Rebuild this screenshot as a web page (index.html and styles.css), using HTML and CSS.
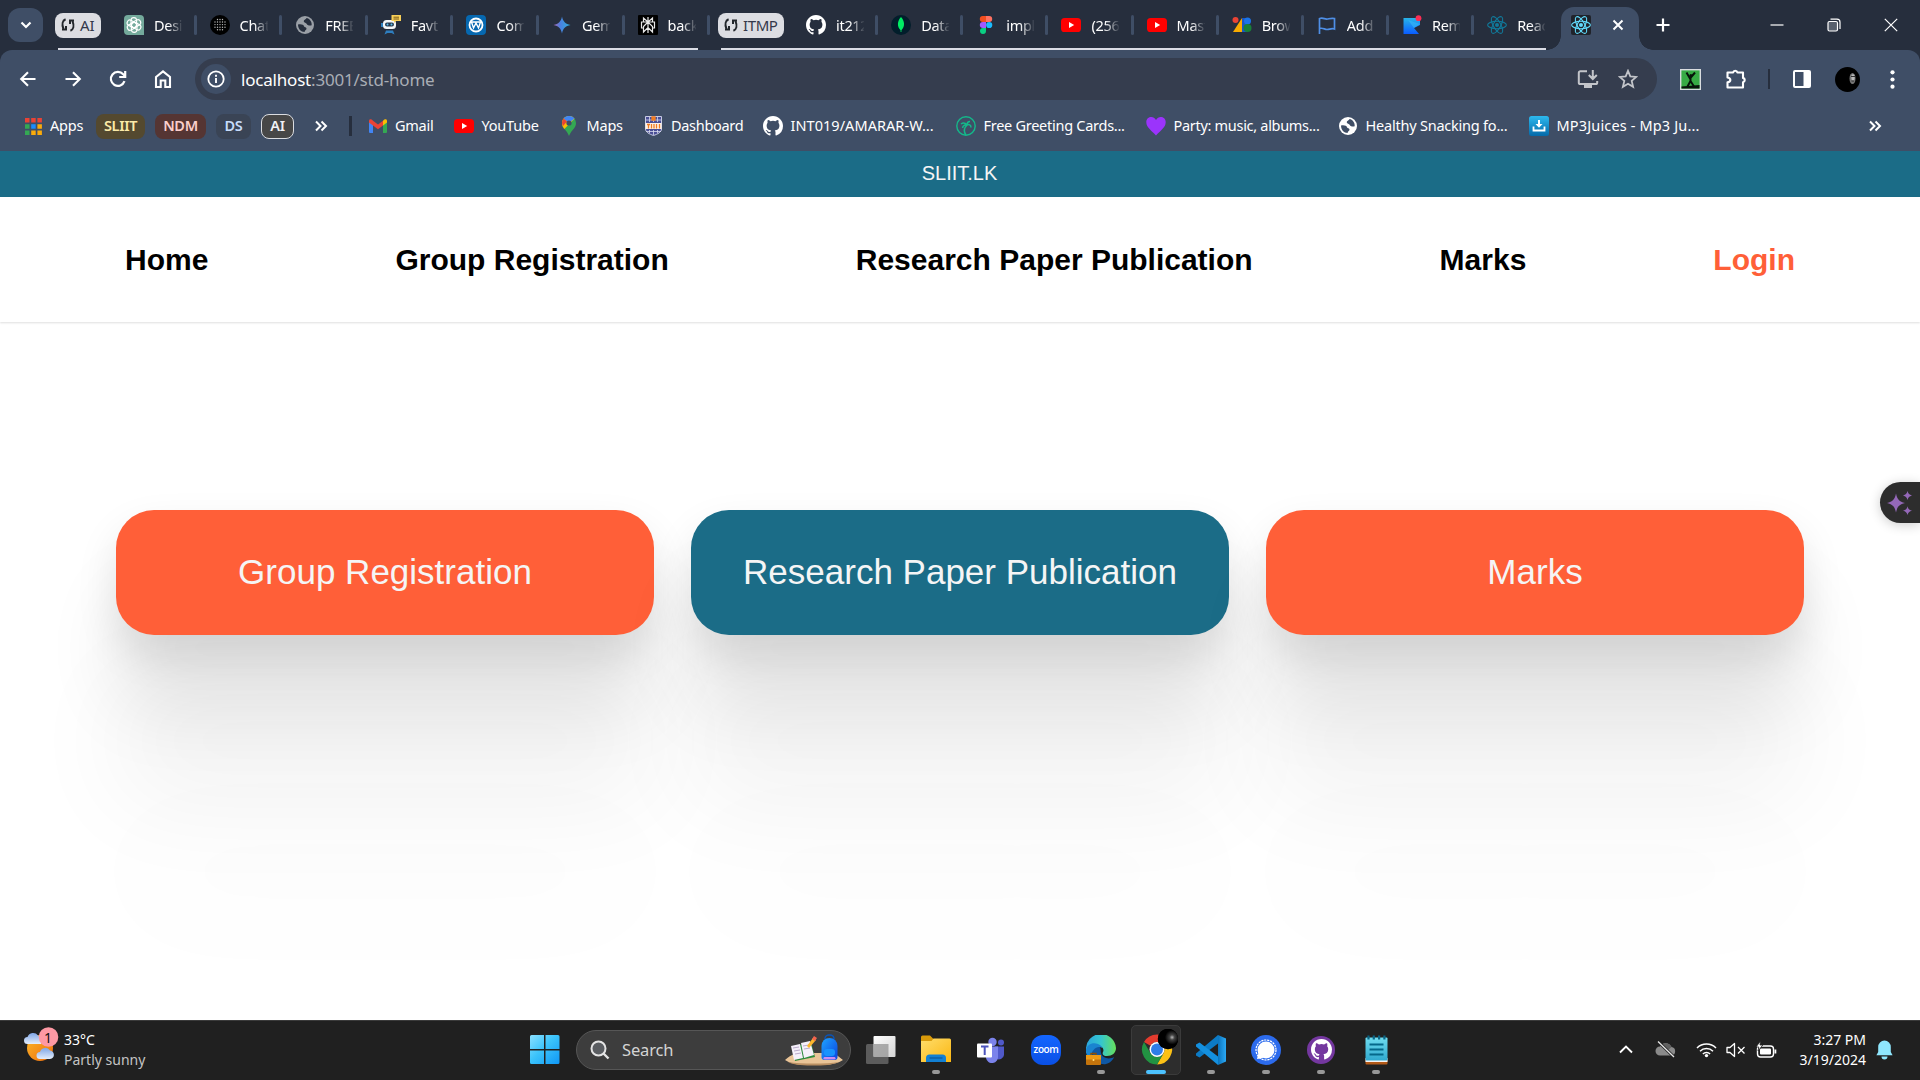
FILE: index.html
```html
<!DOCTYPE html>
<html lang="en">
<head>
<meta charset="utf-8">
<title>SLIIT.LK</title>
<link rel="stylesheet" href="styles.css">
</head>
<body>
<svg class="defs" width="0" height="0">
  <defs>
    <linearGradient id="gem" x1="0" y1="0" x2="1" y2="0"><stop offset="0" stop-color="#b06ab5"/><stop offset=".4" stop-color="#4a7fe0"/><stop offset="1" stop-color="#2fb0d8"/></linearGradient>
    <linearGradient id="sun" x1="0" y1="0" x2="1" y2="1"><stop offset="0" stop-color="#fbb829"/><stop offset="1" stop-color="#ee6c0c"/></linearGradient>
    <linearGradient id="cloud" x1="0" y1="0" x2="0" y2="1"><stop offset="0" stop-color="#7fa6e6"/><stop offset="1" stop-color="#e4eefc"/></linearGradient>
    <linearGradient id="win" x1="0" y1="0" x2="1" y2="1"><stop offset="0" stop-color="#8be0ff"/><stop offset=".45" stop-color="#3cc4fb"/><stop offset="1" stop-color="#0f97f5"/></linearGradient>
    <linearGradient id="folder" x1="0" y1="0" x2="1" y2="1"><stop offset="0" stop-color="#ffdd6b"/><stop offset="1" stop-color="#fbb712"/></linearGradient>
    <linearGradient id="edge" x1="0" y1="0" x2="1" y2="0"><stop offset="0" stop-color="#2aa5dd"/><stop offset=".5" stop-color="#35c6cf"/><stop offset="1" stop-color="#66e05a"/></linearGradient>
    <linearGradient id="vs" x1="0" y1="0" x2="1" y2="0"><stop offset="0" stop-color="#0b74bd"/><stop offset="1" stop-color="#2ba9f5"/></linearGradient>
    <linearGradient id="note" x1="0" y1="0" x2="0" y2="1"><stop offset="0" stop-color="#6fdcef"/><stop offset="1" stop-color="#2fa9cf"/></linearGradient>
    <linearGradient id="frame" x1="0" y1="0" x2="0" y2="1"><stop offset="0" stop-color="#28b4e8"/><stop offset="1" stop-color="#0a5cff"/></linearGradient>
    <linearGradient id="mp3" x1="0" y1="0" x2="0" y2="1"><stop offset="0" stop-color="#2db9ee"/><stop offset="1" stop-color="#0569a8"/></linearGradient>
    <linearGradient id="bag" x1="0" y1="0" x2="1" y2="1"><stop offset="0" stop-color="#1fa4ff"/><stop offset="1" stop-color="#0a43e0"/></linearGradient>
    <linearGradient id="view" x1="0" y1="0" x2="1" y2="1"><stop offset="0" stop-color="#fff"/><stop offset="1" stop-color="#d4d4d4"/></linearGradient>
    <radialGradient id="orb" cx=".7" cy=".42" r=".35"><stop offset="0" stop-color="#b8b8b8"/><stop offset=".35" stop-color="#444"/><stop offset="1" stop-color="#000"/></radialGradient>
    <symbol id="sync" viewBox="0 0 14 14"><path d="M4.600 1.200C1.600 2.400.6 6 2.400 10.600M1 11.400h4V8M9.400 12.800c3-1.200 4-4.800 2.200-9.400M13 2.600H9V6" fill="none" stroke="#22262b" stroke-width="2"/></symbol>
    <symbol id="yt" viewBox="0 0 20 20"><rect y="3" width="20" height="14" rx="3.600" fill="#f00"/><path d="M8 7v6l5.200-3z" fill="#fff"/></symbol>
    <symbol id="gh" viewBox="0 0 16 16"><path d="M8 0C3.58 0 0 3.58 0 8c0 3.54 2.29 6.53 5.47 7.59.4.07.55-.17.55-.38 0-.19-.01-.82-.01-1.49-2.01.37-2.53-.49-2.69-.94-.09-.23-.48-.94-.82-1.13-.28-.15-.68-.52-.01-.53.63-.01 1.08.58 1.23.82.72 1.21 1.87.87 2.33.66.07-.52.28-.87.51-1.07-1.78-.2-3.64-.89-3.64-3.95 0-.87.31-1.59.82-2.15-.08-.2-.36-1.02.08-2.12 0 0 .67-.21 2.200.82a7.600 7.600 0 0 1 4 0c1.530-1.040 2.200-.82 2.200-.82.44 1.100.16 1.920.08 2.120.51.56.82 1.270.82 2.150 0 3.070-1.870 3.750-3.650 3.950.29.25.54.73.54 1.480 0 1.070-.01 1.930-.01 2.200 0 .21.15.46.55.38A8 8 0 0 0 16 8c0-4.420-3.580-8-8-8z" fill="currentColor"/></symbol>
    <symbol id="react" viewBox="-10 -10 20 20"><g fill="none" stroke="currentColor" stroke-width="1.100"><ellipse rx="9.400" ry="3.700"/><ellipse rx="9.400" ry="3.700" transform="rotate(60)"/><ellipse rx="9.400" ry="3.700" transform="rotate(120)"/></g><circle r="2" fill="currentColor"/></symbol>
    <symbol id="globe" viewBox="0 0 20 20"><circle cx="10" cy="10" r="9" fill="currentColor"/><path d="M3 9.500c3.500-.5 5.500.2 6 1.800.4 1.400 2.500.6 2.500 2.200 0 1.500-1.500 1.500-2 3.500-3.500 0-6.500-3-6.500-7.500z" fill="var(--cut)"/><path d="M11.500 3c-.5 1.500-3 1.800-2.700 3.500.2 1.500 2.400 1 3 2.500.6 1.300 2.700 2 4.900 1.200C17 6.500 14.500 3.500 11.500 3z" fill="var(--cut)"/></symbol>
    <symbol id="more" viewBox="0 0 14 12"><path d="M2 1.500 6.500 6 2 10.500M7.500 1.500 12 6l-4.500 4.500" fill="none" stroke="#fff" stroke-width="2"/></symbol>
  </defs>
</svg>

<header class="browser">
  <div class="tabstrip">
    <button class="tab-search"><svg width="12" height="8" viewBox="0 0 12 8"><path d="m1.500 1.500 4.500 4.500 4.500-4.500" fill="none" stroke="#fff" stroke-width="2.200"/></svg></button>
    <div class="group group-ai">
      <span class="chip"><svg width="14" height="14"><use href="#sync"/></svg>AI</span>
      <div class="tab"><svg width="20" height="20" viewBox="0 0 20 20"><path d="M4 0h12a4 4 0 0 1 4 4v16H4a4 4 0 0 1-4-4V4a4 4 0 0 1 4-4z" fill="#74aa9c"/><g fill="none" stroke="#fff" stroke-width="1.100"><rect x="7" y="2.600" width="5.600" height="10" rx="2.800"/><rect x="7" y="2.600" width="5.600" height="10" rx="2.800" transform="rotate(60 10 10)"/><rect x="7" y="2.600" width="5.600" height="10" rx="2.800" transform="rotate(120 10 10)"/><rect x="7" y="2.600" width="5.600" height="10" rx="2.800" transform="rotate(180 10 10)"/><rect x="7" y="2.600" width="5.600" height="10" rx="2.800" transform="rotate(240 10 10)"/><rect x="7" y="2.600" width="5.600" height="10" rx="2.800" transform="rotate(300 10 10)"/></g></svg><span>Desi</span></div>
      <div class="tab"><svg width="20" height="20" viewBox="0 0 20 20"><circle cx="10" cy="10" r="10" fill="#000"/><g stroke="#bbb" stroke-width="1.400" stroke-linecap="round" stroke-dasharray="0 2.500"><path d="M7.500 4.500h6M5 7h11M5 9.600h11M5 12.200h11M7.500 14.800h6"/></g></svg><span>Chat</span></div>
      <div class="tab"><svg class="globe-gray" width="20" height="20"><use href="#globe"/></svg><span>FREE</span></div>
      <div class="tab"><svg width="20" height="20" viewBox="0 0 20 20"><rect x="2" y="5" width="13" height="9" rx="3.500" fill="#f4f6f8"/><rect x="0" y="8" width="2" height="4" fill="#2e7fc0"/><rect x="4" y="7.500" width="9" height="4" rx="2" fill="#26384f"/><circle cx="6.500" cy="9.500" r="1" fill="#5fc4f2"/><circle cx="10.500" cy="9.500" r="1" fill="#5fc4f2"/><path d="M5 15.500h7l1.500 4-3-1.500H6.500l-3 1.500z" fill="#2e7fc0"/><path d="M10.500 0H20v6h-5l-2 2V6h-2.500z" fill="#f7cf58"/><path d="M12.500 2.200h5.500M12.500 4h5.500" stroke="#795a1a"/></svg><span>Favt</span></div>
      <div class="tab"><svg width="20" height="20" viewBox="0 0 20 20"><rect width="20" height="20" rx="4" fill="#0668b0"/><circle cx="10" cy="10" r="6.500" fill="none" stroke="#fff" stroke-width="1.800"/><path d="m5.500 7 2 6 2.500-5 2.500 5 2-6M4 7h12" fill="none" stroke="#fff" stroke-width="1.400"/></svg><span>Com</span></div>
      <div class="tab"><svg width="20" height="20" viewBox="0 0 20 20"><path d="M10 1.500c.9 5 3.500 7.500 8.500 8.500-5 .9-7.600 3.500-8.500 8.500-.9-5-3.500-7.600-8.500-8.500 5-1 7.600-3.500 8.500-8.500z" fill="url(#gem)"/></svg><span>Gemi</span></div>
      <div class="tab last"><svg width="20" height="20" viewBox="0 0 20 20"><rect width="20" height="20" rx="1" fill="#000"/><path d="M10 2v16M10 7 5.500 3v4h9V3zM5.500 7H3.500v6h2M14.500 7h2v6h-2M10 7l-4.500 4.500V17l4.500-4.500 4.500 4.500v-5.500z" fill="none" stroke="#e8e8e8" stroke-width="1.200"/></svg><span>back</span></div>
    </div>
    <div class="group group-itmp">
      <span class="chip"><svg width="14" height="14"><use href="#sync"/></svg>ITMP</span>
      <div class="tab"><svg width="20" height="20"><use href="#gh"/></svg><span>it212</span></div>
      <div class="tab"><svg width="20" height="20" viewBox="0 0 20 20"><circle cx="10" cy="10" r="10" fill="#021e2b"/><path d="M10 2c3.800 4 4.200 9.500.4 13.300V17h-.8v-1.700C5.800 11.500 6.200 6 10 2z" fill="#00ed64"/></svg><span>Data</span></div>
      <div class="tab"><svg width="20" height="20" viewBox="0 0 20 20"><path d="M10 1H6.800a3 3 0 0 0 0 6H10z" fill="#f24e1e"/><path d="M10 1h3.200a3 3 0 0 1 0 6H10z" fill="#ff7262"/><path d="M10 7H6.800a3 3 0 0 0 0 6H10z" fill="#a259ff"/><circle cx="13.200" cy="10" r="3.100" fill="#1abcfe"/><path d="M10 13H6.800a3 3 0 1 0 3.200 3z" fill="#0acf83"/></svg><span>impl</span></div>
      <div class="tab"><svg width="20" height="20"><use href="#yt"/></svg><span>(256)</span></div>
      <div class="tab"><svg width="20" height="20"><use href="#yt"/></svg><span>Mast</span></div>
      <div class="tab"><svg width="20" height="20" viewBox="0 0 20 20"><circle cx="3.500" cy="5" r="3" fill="#ea4335"/><path d="M10 3v14H1z" fill="#f9ab00"/><path d="M10 3h4a3.500 3.500 0 0 1 1 6.500V17h-5z" fill="#1a56c4"/><circle cx="15.500" cy="6" r="3.500" fill="#1a73e8"/><circle cx="15.500" cy="13" r="4" fill="#188038"/></svg><span>Brow</span></div>
      <div class="tab"><svg width="20" height="20" viewBox="0 0 20 20"><path d="M2.500 19V3M2.500 3.500c4-1.200 5 1 8 .5 3-.6 4-1 7-.5v10.500c-3-1-5 .5-7.500.5s-4-2-7.500-1" fill="none" stroke="#4f8fe6" stroke-width="1.700"/></svg><span>Add</span></div>
      <div class="tab"><svg width="20" height="20" viewBox="0 0 20 20"><path d="M1.500 3H14a4 4 0 0 0 4 3v4l-6 3 5 6H1.500z" fill="url(#frame)"/><path d="m6 5 6 8 6-4z" fill="#39b8f5" opacity=".6"/><circle cx="16.500" cy="3.200" r="2.900" fill="#fb2d54"/></svg><span>Rem</span></div>
      <div class="tab last"><svg class="react-dark" width="20" height="20"><use href="#react"/></svg><span>Reac</span></div>
    </div>
    <div class="tab-active"><span class="react-tile"><svg width="20" height="20"><use href="#react"/></svg></span><svg width="12" height="12" viewBox="0 0 12 12"><path d="m1.500 1.500 9 9m0-9-9 9" stroke="#fff" stroke-width="2"/></svg></div>
    <svg class="new-tab" width="14" height="14" viewBox="0 0 14 14"><path d="M7 .5v13M.5 7h13" stroke="#fff" stroke-width="2.200"/></svg>
    <div class="window-buttons">
      <svg width="14" height="14" viewBox="0 0 14 14"><path d="M.5 7h13" stroke="#fff" stroke-width="1.200"/></svg>
      <svg width="14" height="14" viewBox="0 0 14 14"><rect x="1" y="3.500" width="9.500" height="9.500" rx="1.500" fill="#8a919e" fill-opacity=".5" stroke="#fff" stroke-width="1.200"/><path d="M3.500 1.200h6.500a3 3 0 0 1 3 3V11" fill="none" stroke="#fff" stroke-width="1.200"/></svg>
      <svg width="14" height="14" viewBox="0 0 14 14"><path d="m.8.800 12.400 12.400m0-12.400L.8 13.200" stroke="#fff" stroke-width="1.200"/></svg>
    </div>
  </div>

  <div class="toolbar">
    <div class="nav-buttons">
      <svg width="20" height="20" viewBox="0 0 20 20"><path d="M17.500 10H3.500M10 3.200 3.200 10l6.800 6.800" fill="none" stroke="#fff" stroke-width="2.100"/></svg>
      <svg width="20" height="20" viewBox="0 0 20 20"><path d="M2.500 10h14M10 3.200 16.800 10 10 16.800" fill="none" stroke="#fff" stroke-width="2.100"/></svg>
      <svg width="20" height="20" viewBox="0 0 20 20"><path d="M16.500 12.200A7 7 0 1 1 15.200 5.300L17 7M17.200 2v6h-6" fill="none" stroke="#fff" stroke-width="2.200"/></svg>
      <svg width="20" height="20" viewBox="0 0 20 20"><path d="M3 8 10 2.400 17 8v10h-4.700v-6.500H7.700V18H3z" fill="none" stroke="#fff" stroke-width="2.100"/></svg>
    </div>
    <div class="omnibox">
      <span class="site-info"><svg width="18" height="18" viewBox="0 0 18 18"><circle cx="9" cy="9" r="7.700" fill="none" stroke="#fff" stroke-width="1.800"/><path d="M9 8v5M9 4.700v2" stroke="#fff" stroke-width="1.900"/></svg></span>
      <span class="url">localhost<i>:3001/std-home</i></span>
      <svg class="install" width="22" height="20" viewBox="0 0 22 20"><path d="M10 2.200H3.400a1.600 1.600 0 0 0-1.600 1.600v9.600A1.600 1.600 0 0 0 3.400 15h15.200a1.600 1.600 0 0 0 1.600-1.600V12M15.800 1v8.500M11.800 6l4 4 4-4" fill="none" stroke="#c3c5ca" stroke-width="2"/><path d="M7 15h8v4H7z" fill="#c3c5ca"/></svg>
      <svg width="20" height="20" viewBox="0 0 20 20"><path d="m10 1.800 2.300 5.600 6 .5-4.600 4 1.400 5.900L10 14.700l-5.100 3.100 1.400-5.900-4.600-4 6-.5z" fill="none" stroke="#c3c5ca" stroke-width="1.800"/></svg>
    </div>
    <div class="tools">
      <svg class="t-ext" width="21" height="21" viewBox="0 0 21 21"><rect x=".7" y=".7" width="19.600" height="19.600" fill="#37ab45" stroke="#d8dcdf" stroke-width="1.400"/><path d="M6.500 3.500 10 9.500 15 3.500M10.500 8v5M10.500 12l-3 5.500M10.500 12l3.500 5.500" fill="none" stroke="#06140a" stroke-width="2"/><circle cx="10.800" cy="6.500" r="1.500" fill="#06140a"/><path d="M1.500 17.500 19.500 16v3.500h-18z" fill="#06140a"/></svg>
      <svg class="t-puzzle" width="22" height="22" viewBox="0 0 22 22"><path d="M2.500 4.500h5.600a2.200 2.200 0 0 1 4.300 0h5.600v5.400a2.200 2.200 0 0 1 0 4.300v5.300H2.500v-5.200c3.800-.6 3.800-4.200 0-4.800z" fill="none" stroke="#fff" stroke-width="2.100" stroke-linejoin="round"/></svg>
      <span class="rule"></span>
      <svg class="t-panel" width="18" height="18" viewBox="0 0 18 18"><rect x="1" y="1" width="16" height="16" rx="1" fill="none" stroke="#fff" stroke-width="2"/><path d="M10.500 1H17v16h-6.500z" fill="#fff"/></svg>
      <svg class="t-avatar" width="25" height="25" viewBox="0 0 25 25"><circle cx="12.500" cy="12.500" r="12.500" fill="#000"/><ellipse cx="17.500" cy="11.500" rx="3" ry="5.500" fill="#777"/><ellipse cx="18" cy="10.500" rx="1.600" ry="3.200" fill="#bbb"/><path d="M16 9.500h4M16.500 14h2.500" stroke="#222" stroke-width=".9"/></svg>
      <svg width="5" height="19" viewBox="0 0 5 19"><g fill="#fff"><circle cx="2.500" cy="2.300" r="2.100"/><circle cx="2.500" cy="9.500" r="2.100"/><circle cx="2.500" cy="16.700" r="2.100"/></g></svg>
    </div>
  </div>

  <nav class="bookmarks">
    <a class="bm bm-apps"><svg width="17" height="17" viewBox="0 0 17 17"><path d="M0 0h4.500v4.500H0zM6.200 0h4.500v4.500H6.200zM12.400 0h4.500v4.500h-4.500z" fill="#ea4335"/><path d="M0 6.200h4.500v4.500H0zM0 12.400h4.500v4.500H0z" fill="#34a853"/><path d="M6.200 6.200h4.500v4.500H6.200z" fill="#1a8cff"/><path d="M12.400 6.200h4.500v4.500h-4.500zM6.200 12.400h4.500v4.500H6.200zM12.400 12.400h4.500v4.500h-4.500z" fill="#fbab0a"/></svg><span>Apps</span></a>
    <a class="pill pill-yellow">SLIIT</a><a class="pill pill-red">NDM</a><a class="pill pill-slate">DS</a><a class="pill pill-grey">AI</a>
    <svg class="more-groups" width="14" height="12"><use href="#more"/></svg>
    <span class="rule bold"></span>
    <a class="bm bm-gmail"><svg width="18" height="14" viewBox="0 0 18 14"><path d="M0 2v11a1 1 0 0 0 1 1h3V5z" fill="#4285f4"/><path d="M18 2v11a1 1 0 0 1-1 1h-3V5z" fill="#34a853"/><path d="M14 1.800V6.500l4-3V2c0-2-2-2.500-4-.2z" fill="#fbbc04"/><path d="M0 3.500V2C0 0 2-.5 4 1.800l5 3.800 5-3.800v4.700l-5 3.800z" fill="#ea4335"/></svg><span>Gmail</span></a>
    <a class="bm bm-yt"><svg width="20" height="20"><use href="#yt"/></svg><span>YouTube</span></a>
    <a class="bm bm-maps"><svg width="14" height="20" viewBox="0 0 14 20"><path d="M0 7c0 3 1.200 4.600 3.500 7.300C5.500 16.600 6 18 7 20c1-2 1.500-3.400 3.500-5.700C12.800 11.600 14 10 14 7A7 7 0 0 0 0 7z" fill="#34a853"/><path d="M0 7c0 2.500.8 4 2.300 6L12.500 2.700A7 7 0 0 0 0 7z" fill="#fbbc04"/><path d="M1.500 2.600 7 7l5.500-4.400A7 7 0 0 0 1.500 2.600z" fill="#4285f4"/><path d="M1.500 2.600 5 5.500 1 10A7 7 0 0 1 1.500 2.600z" fill="#ea4335"/><circle cx="7" cy="7" r="2.600" fill="#3f4e66"/></svg><span>Maps</span></a>
    <a class="bm bm-dash"><svg width="17" height="20" viewBox="0 0 17 20"><path d="M.5.500h16V13c0 3-3.500 5-8 6.500C4 18 .5 16 .5 13z" fill="#4a4f96" stroke="#c8cbe4"/><path d="M4.500 1v5M8.500 1v5M12.500 1v5M1 4h15M4.500 14v3M8.500 14v5M12.500 14v3M1 15.500h15" stroke="#d7d9ec" stroke-width=".8"/><path d="M.5 7h16v6H.5z" fill="#fff3e6"/><path d="M2 8.500h3M3.500 8v4.500M6.500 8v4.500M9 8v4.500M11.500 8v4.500M14.500 8v4.500M7 1h3v3H7z" stroke="#f07c22" stroke-width="1.300" fill="#f07c22"/></svg><span>Dashboard</span></a>
    <a class="bm bm-int"><svg width="20" height="20"><use href="#gh"/></svg><span>INT019/AMARAR-W...</span></a>
    <a class="bm bm-free"><svg width="20" height="20" viewBox="0 0 20 20"><circle cx="10" cy="10" r="9.200" fill="none" stroke="#14b88a" stroke-width="1.400"/><path d="M10 19c-3-4-2-7 1-10M11 9C9 6.500 7 6.500 5 8M11 9c-2-.5-4 .5-4.500 3M11 9c0-2.500 1.500-3.500 3-3.500M11 9c2-1 4 0 4 2.500" fill="none" stroke="#14b88a" stroke-width="1.500"/></svg><span>Free Greeting Cards...</span></a>
    <a class="bm bm-party"><svg width="20" height="20" viewBox="0 0 20 20"><path d="M10 19.500C6 15 .3 11.500.3 6.300.3.500 7.500-.8 10 4c2.500-4.800 9.700-3.500 9.700 2.300C19.700 11.500 14 15 10 19.500z" fill="#9b34fb"/></svg><span>Party: music, albums...</span></a>
    <a class="bm bm-health"><svg width="20" height="20"><use href="#globe"/></svg><span>Healthy Snacking fo...</span></a>
    <a class="bm bm-mp3"><svg width="20" height="20" viewBox="0 0 20 20"><rect width="20" height="20" rx="2.500" fill="url(#mp3)"/><path d="M9 4h2v4h2.500L10 11.800 6.500 8H9z" fill="#fff"/><path d="M4.500 10.500v4h11v-4" fill="none" stroke="#fff" stroke-width="1.800"/></svg><span>MP3Juices - Mp3 Ju...</span></a>
    <svg class="more-marks" width="14" height="12"><use href="#more"/></svg>
  </nav>
</header>

<main class="page">
  <div class="topbar">SLIIT.LK</div>
  <nav class="site-nav">
    <a>Home</a><a>Group Registration</a><a>Research Paper Publication</a><a>Marks</a><a class="login">Login</a>
  </nav>
  <section class="cards">
    <a class="card">Group Registration</a>
    <a class="card teal">Research Paper Publication</a>
    <a class="card">Marks</a>
  </section>
  <aside class="assistant"><svg width="25" height="24" viewBox="0 0 25 24"><g fill="#9468b8"><path d="M9 2.500c1.400 6.200 3.200 8 9 9.500-5.800 1.500-7.600 3.300-9 9.500C7.600 15.300 5.800 13.500 0 12c5.800-1.500 7.600-3.300 9-9.500z"/><path d="M20.500 0c.8 2.900 1.700 3.700 4.500 4.500-2.800.8-3.700 1.600-4.500 4.500-.8-2.900-1.700-3.700-4.500-4.500 2.800-.8 3.700-1.600 4.500-4.500zM20.500 15.200c.8 2.900 1.700 3.700 4.500 4.500-2.800.8-3.700 1.500-4.500 4.300-.8-2.800-1.700-3.500-4.500-4.300 2.800-.8 3.700-1.600 4.500-4.500z"/></g></svg></aside>
</main>

<footer class="taskbar">
  <div class="weather">
    <svg width="36" height="36" viewBox="0 0 36 36"><circle cx="16" cy="21" r="13" fill="url(#sun)"/><path d="M3.500 17a3.500 3.500 0 0 1 0-7A6 6 0 0 1 14 8.500c3 1 4 4 3 8.500z" fill="url(#cloud)"/><path d="M16 32a3.500 3.500 0 0 1 0-7 5.500 5.500 0 0 1 10-1.500c5 .5 5.500 8 0 8.500z" fill="url(#cloud)"/><circle cx="24.500" cy="10" r="9.800" fill="#fd99a4"/></svg>
    <b class="count">1</b>
    <p><span>33°C</span><span class="dim">Partly sunny</span></p>
  </div>
  <svg class="start" width="30" height="30" viewBox="0 0 30 30"><path d="M1.500 0H14v14H0V1.500A1.500 1.500 0 0 1 1.500 0zM15.500 0h12.500A1.500 1.500 0 0 1 29.500 1.500V14h-14zM0 15.500h14v13.500H1.500A1.500 1.500 0 0 1 0 27.500zM15.500 15.500h14v12a1.500 1.500 0 0 1-1.500 1.500H15.500z" fill="url(#win)"/></svg>
  <div class="search">
    <svg width="20" height="20" viewBox="0 0 20 20"><circle cx="8.500" cy="8.500" r="7" fill="#5a5d61" stroke="#e4e4e4" stroke-width="2"/><path d="m13.500 13.500 5 5" stroke="#e4e4e4" stroke-width="2.400"/></svg>
    <span>Search</span>
    <svg width="58" height="32" viewBox="0 0 58 32"><path d="M0 26c8-8 16-7 24-7h25l9 7c-8 5-18 5-29 5S8 31 0 26z" fill="#e9c497"/><path d="M3 28c14 2 38 2 51 0-6 3-16 3.500-25 3.500S10 31.500 3 28z" fill="#b98f62"/><path d="m7 13 19-5 4 15-20 4z" fill="#2e8b3d"/><path d="m6 12 9-2 3 14-9 2zM16 9l9-2 4 14-10 3z" fill="#f5f0fa"/><path d="m8 14 6-1M9 17l6-1M10 20l6-1M18 12l6-1M19 15l6-1" stroke="#b9aac9"/><path d="m22 12 6-8 3 2-7 8z" fill="#fcb62c"/><path d="m27 5 2-3 3 2-2 3z" fill="#f2644e"/><rect x="40" y="1" width="9" height="7" rx="4" fill="none" stroke="#0b53b5" stroke-width="1.500"/><path d="M36.500 12a8 8 0 0 1 16 0v11a3 3 0 0 1-3 3h-10a3 3 0 0 1-3-3z" fill="url(#bag)"/><rect x="39" y="15" width="11" height="7" rx="3" fill="#1893fd"/><rect x="38.500" y="23" width="12" height="2.500" rx="1.200" fill="#c98df0"/></svg>
  </div>
  <div class="apps">
    <span class="app"><svg width="30" height="30" viewBox="0 0 30 30"><rect x="0" y="9" width="22.500" height="20" rx="1.500" fill="#5c5c5c"/><rect x="7.500" y="1" width="22" height="21" rx="1" fill="url(#view)"/><path d="M7.500 9h15v13h-15z" fill="#999" opacity=".8"/></svg></span>
    <span class="app run"><svg width="30" height="30" viewBox="0 0 30 30"><path d="M0 2a1.500 1.500 0 0 1 1.500-1.500H9L12.500 4v5H0z" fill="#d99a0a"/><path d="M0 6h10.500l2-2.500H28.500A1.500 1.500 0 0 1 30 5v22H0z" fill="url(#folder)"/><path d="M5 27v-4a3.500 3.500 0 0 1 3.500-3.500h13A3.500 3.500 0 0 1 25 23v4z" fill="#1280d4"/><path d="M8.500 23h13" stroke="#0a4f8f"/></svg></span>
    <span class="app"><svg width="28" height="26" viewBox="0 0 28 26"><circle cx="15.500" cy="5" r="4.200" fill="#7b83eb"/><circle cx="24" cy="5.500" r="3" fill="#5059c9"/><path d="M18 9.500h9V18a5 5 0 0 1-8 3.500z" fill="#5059c9"/><path d="M9 9.500h12V19a6 6 0 0 1-12 2z" fill="#7b83eb"/><rect x="0" y="6.500" width="15" height="14" rx="1" fill="#fff"/><path d="M4 9.500h7.500M7.700 9.500V18" stroke="#4b53bc" stroke-width="2"/></svg></span>
    <span class="app zoom"><i>zoom</i></span>
    <span class="app run"><svg width="30" height="30" viewBox="0 0 30 30"><path d="M0 15A15 15 0 0 1 30 13c0 5-4 8-9 8-4 0-5-2-4-4 1.500-3-1-6-5-6-5 0-9 3-12 8z" fill="url(#edge)"/><path d="M12 11c-5 1-7 6-5 11 2 5 8 8 13 7 4-.8 7-4 8-7-5 3-12 1-13-4-.5-3 0-6-3-7z" fill="#0f58a5"/><path d="M0 15C1 9 7 7 12 9c3 1 4 3 4 4-4-3-11 1-10 9H1z" fill="#1a84d0"/><rect x="0" y="20" width="15" height="10" rx="1" fill="#c4740c"/><path d="M0 20h15v4.500H0z" fill="#ee9a15"/><path d="M5 20v-1.500h5V20" fill="none" stroke="#8a4e06" stroke-width="1.400"/><circle cx="7.500" cy="25" r="1" fill="#ffe07a"/></svg></span>
    <span class="app active"><svg width="38" height="38" viewBox="0 0 38 38"><g transform="translate(17 20.500)"><path d="M-13-7.500A15 15 0 0 1 13-7.500H0a7.500 7.500 0 0 0-6.500 3.700z" fill="#e33b2e"/><path d="M13-7.500A15 15 0 0 1 0 15L6.500 3.700A7.500 7.500 0 0 0 6-4.500L5-7.500z" fill="#fbc116"/><path d="M0 15A15 15 0 0 1-13-7.500L-6.500 3.700A7.500 7.500 0 0 0 4 6.300l2-1.500z" fill="#229342"/><circle r="7.500" fill="#fff"/><circle r="6" fill="#2f7de9"/></g><circle cx="28" cy="10" r="10.200" fill="#000"/><circle cx="28" cy="10" r="10.200" fill="url(#orb)"/></svg></span>
    <span class="app run"><svg width="30" height="30" viewBox="0 0 30 30"><path d="M22 8.500 3.500 22.500 0 20.500v-2L22 0z" fill="#0c7bc6"/><path d="M22 21.500 3.500 7.500 0 9.500v2L22 30z" fill="#1490df"/><path d="M22 0 30 3.500v23L22 30z" fill="url(#vs)"/></svg></span>
    <span class="app run"><svg width="30" height="30" viewBox="0 0 30 30"><circle cx="15" cy="15" r="15" fill="#2c6bed"/><circle cx="15" cy="15" r="8.500" fill="#fff"/><circle cx="15" cy="15" r="10" fill="none" stroke="#fff" stroke-width="1.200" stroke-dasharray="2.200 .8"/><path d="m6 24 1.500-6 5 5z" fill="#fff"/></svg></span>
    <span class="app run gh-desk"><svg width="21" height="21"><use href="#gh"/></svg></span>
    <span class="app run"><svg width="23" height="30" viewBox="0 0 23 30"><rect x=".5" y="24" width="22" height="5.500" rx="1" fill="#b35a18"/><path d="M.5 23h22v4H.5z" fill="#f4f4f4"/><rect x=".5" y="2.500" width="22" height="23" rx="1" fill="url(#note)"/><path d="M4.500 9.500h14M4.500 14.500h14M4.500 19.500h14" stroke="#05688a" stroke-width="2"/><path d="M3.500.500v4M8.800.500v4M14.100.500v4M19.400.500v4" stroke="#0a6484" stroke-width="2.200"/></svg></span>
  </div>
  <div class="tray">
    <svg class="s-up" width="14" height="9" viewBox="0 0 14 9"><path d="m1 7.500 6-6 6 6" fill="none" stroke="#fff" stroke-width="1.900"/></svg>
    <svg class="s-cloud" width="21" height="17" viewBox="0 0 21 17"><path d="M5 14.500a4.500 4.500 0 0 1 0-9A6.500 6.500 0 0 1 16.500 6a4.300 4.300 0 0 1 0 8.500z" fill="#8a8a8a"/><path d="M7 3.500A6.500 6.500 0 0 1 16.500 6L12 10z" fill="#606060"/><path d="M3 .5 19 16" stroke="#222" stroke-width="3"/><path d="M3 .5 19 16" stroke="#e8e8e8" stroke-width="1.300"/></svg>
    <svg class="s-wifi" width="21" height="16" viewBox="0 0 21 16"><g fill="none" stroke="#fff" stroke-width="1.500"><path d="M1 6a13.500 13.500 0 0 1 19 0M4 9.200a9.200 9.200 0 0 1 13 0M6.900 12a5 5 0 0 1 7.200 0"/></g><circle cx="10.500" cy="13.600" r="1.700" fill="#fff"/></svg>
    <svg class="s-vol" width="20" height="16" viewBox="0 0 20 16"><path d="M1 5.500h3L8.500 1.500v13L4 10.500H1z" fill="none" stroke="#fff" stroke-width="1.300" stroke-linejoin="round"/><path d="m12 5 6.500 6.500m0-6.500L12 11.500" stroke="#fff" stroke-width="1.300"/></svg>
    <svg class="s-bat" width="21" height="18" viewBox="0 0 21 18"><rect x="1.500" y="5" width="16" height="11" rx="3" fill="none" stroke="#fff" stroke-width="1.400"/><rect x="4" y="7.500" width="11" height="6" rx="1" fill="#fff"/><path d="M18.500 8.500h1.800v4h-1.800z" fill="#fff"/><path d="M4.500 0 0 6h2.800L2 10l4.800-6H4z" fill="#fff" stroke="#222" stroke-width=".8"/></svg>
    <p class="clock"><span>3:27 PM</span><span>3/19/2024</span></p>
    <svg class="s-bell" width="17" height="20" viewBox="0 0 17 20"><path d="M8.500.500A6.300 6.300 0 0 1 14.800 7v5l1.800 3.300H.4L2.200 12V7A6.300 6.300 0 0 1 8.500.500zM5.500 16.500h6a3 3 0 0 1-6 0z" fill="#8fe6fd"/></svg>
  </div>
</footer>
</body>
</html>
```
FILE: styles.css
```css
* { box-sizing: border-box; }
body {
  margin: 0;
  width: 1920px;
  height: 1080px;
  overflow: hidden;
  display: flex;
  flex-direction: column;
  background: #fff;
  font-family: "Noto Sans", "Open Sans", sans-serif;
}
svg { display: block; flex: none; }
p { margin: 0; }
.defs { position: absolute; }

/* browser chrome */
.browser { height: 151px; flex: none; background: linear-gradient(#262e3d 70px, #3f4e66 70px); color: #fff; }
.tabstrip { height: 50px; display: flex; background: #262e3d; align-items: flex-start; }
.tab-search {
  width: 35px; height: 34px; margin: 8px 20px 0 8px; padding: 0; border: 0; border-radius: 12px;
  background: #3f4e66; display: flex; align-items: center; justify-content: center;
}
.group { display: flex; height: 50px; position: relative; flex: none; }
.group::after { content: ""; position: absolute; left: 3px; right: 0; bottom: 0; height: 2px; background: #dadce4; }
.group-ai { width: 643px; margin-left: -8px; }
.group-itmp { width: 828px; margin-left: 20px; }
.chip {
  height: 25px; margin-top: 13px; padding: 0 8px 2px 6px; border-radius: 8px; background: #dcdde2; color: #33384a;
  display: flex; align-items: center; gap: 5px; font-size: 15px; flex: none;
}
.group-ai .chip { width: 46px; margin-right: 11px; }
.group-itmp .chip { width: 66px; margin-right: 10px; letter-spacing: -.4px; }
.tab { width: 85.15px; height: 50px; padding-left: 12px; display: flex; align-items: center; gap: 10px; flex: none; position: relative; }
.group-ai .tab { width: 85.6px; }
.tab::after { content: ""; position: absolute; right: 1px; top: 15px; width: 3px; height: 20px; border-radius: 2px; background: #3f4e66; }
.group-itmp .tab.last::after { display: none; }
.tab span {
  width: 28px; overflow: hidden; white-space: nowrap; font-size: 14.500px; letter-spacing: -.3px; line-height: 20px;
  -webkit-mask-image: linear-gradient(90deg, #000 14px, transparent 29px);
  mask-image: linear-gradient(90deg, #000 14px, transparent 29px);
}
.globe-gray { color: #9a9fa6; --cut: #262e3d; }
.react-dark { color: #11799a; }
.tab-active {
  width: 78px; height: 43px; margin: 7px 0 0 15px; padding: 0 15px 7px 10px; border-radius: 13px 13px 0 0;
  background: #3f4e66; display: flex; align-items: center; justify-content: space-between; position: relative; flex: none;
}
.tab-active::before, .tab-active::after { content: ""; position: absolute; bottom: 0; width: 14px; height: 14px; }
.tab-active::before { left: -14px; background: radial-gradient(circle at 0 0, transparent 13.5px, #3f4e66 14px); }
.tab-active::after { right: -14px; background: radial-gradient(circle at 100% 0, transparent 13.5px, #3f4e66 14px); }
.react-tile { background: #20232a; border-radius: 2px; color: #61dafb; }
.new-tab { margin: 18px 0 0 17px; }
.window-buttons { margin: 18px 22px 0 auto; display: flex; gap: 43px; }

.toolbar { height: 58px; display: flex; align-items: center; background: #3f4e66; border-radius: 12px 12px 0 0; }
.nav-buttons { display: flex; gap: 25px; padding-left: 17.500px; width: 195px; }
.omnibox { width: 1462px; height: 42px; border-radius: 21px; background: #353d4e; display: flex; align-items: center; padding: 0 19px 0 6px; }
.site-info { width: 30px; height: 30px; border-radius: 50%; background: #3f4e66; display: flex; align-items: center; justify-content: center; }
.url { margin: 0 auto 0 10px; font-size: 17px; letter-spacing: -.2px; }
.url i { font-style: normal; color: #a9adb5; }
.install { margin-right: 19px; }
.tools { display: flex; align-items: center; padding-left: 23px; }
.t-ext { margin-right: 24px; }
.rule { width: 2px; height: 20px; margin: 0 23px 0 21px; background: #262e3d; }
.rule.bold { width: 3px; margin: 0 17px 0 21px; }
.t-avatar { margin: 0 30px 0 24px; }

.bookmarks { height: 43px; padding: 0 38px 7px 25px; display: flex; align-items: center; background: #3f4e66; --cut: #3f4e66; }
.bm { display: flex; align-items: center; gap: 7.500px; font-size: 14.500px; letter-spacing: -.2px; white-space: nowrap; flex: none; }
.bm span { padding-bottom: 2px; }
.bm-apps { width: 71px; gap: 8px; }
.bm-gmail { width: 85px; gap: 8px; letter-spacing: -.25px; }
.bm-yt { width: 108px; }
.bm-maps { width: 83px; gap: 10.500px; }
.bm-dash { width: 118px; gap: 9px; letter-spacing: -.3px; }
.bm-int { width: 193px; letter-spacing: .05px; }
.bm-free { width: 190px; letter-spacing: -.27px; }
.bm-party { width: 192px; letter-spacing: -.3px; }
.bm-health { width: 191px; letter-spacing: -.22px; }
.bm-mp3 { letter-spacing: .15px; }
.pill { height: 25px; margin-right: 10px; padding-bottom: 2px; border-radius: 8px; display: flex; align-items: center; justify-content: center; font-size: 14.500px; font-weight: 600; letter-spacing: -.35px; flex: none; }
.pill-yellow { width: 49px; background: #54492f; color: #fbeaa8; }
.pill-red { width: 51px; background: #553533; color: #fbcfcb; }
.pill-slate { width: 35px; background: #3a4455; color: #c7dcfb; }
.pill-grey { width: 33px; background: #474747; border: 1.500px solid #dadce0; color: #f1f1f4; }
.more-groups { margin-left: 10px; }
.more-marks { margin-left: auto; }

/* page */
.page { height: 869px; flex: none; position: relative; font-family: "Liberation Sans", Arial, sans-serif; }
.topbar { height: 46px; background: #1b6c87; color: #f5f5f5; font-size: 20px; line-height: 45px; text-align: center; }
.site-nav {
  height: 125px; padding: 0 125px; display: flex; justify-content: space-between; align-items: center;
  font-size: 30px; font-weight: 700; color: #000; box-shadow: 0 1px 2px rgba(0, 0, 0, .13);
}
.login { color: #ff5f38; }
.cards { display: flex; gap: 37px; padding: 188px 116px 0; }
.card {
  flex: 1; height: 125px; border-radius: 38px; background: #ff5f38; color: #f5f5f5; font-size: 35px; line-height: 123px; text-align: center;
  box-shadow: 0 19px 41px rgba(0, 0, 0, .1), 0 75px 75px rgba(0, 0, 0, .09), 0 168px 101px rgba(0, 0, 0, .05), 0 299px 120px rgba(0, 0, 0, .01);
}
.card.teal { background: #1b6c87; }
.topbar { padding-right: 1px; }
.assistant {
  position: absolute; right: 0; top: 331px; width: 40px; height: 41px; border-radius: 21px 0 0 21px; background: #2d2d2d;
  display: flex; align-items: center; padding-left: 7px; box-shadow: 0 2px 12px rgba(0, 0, 0, .2);
}

/* taskbar */
.taskbar { height: 60px; padding-bottom: 2px; flex: none; display: flex; align-items: center; background: #202020; border-top: 1px solid #3a3a3a; color: #fff; position: relative; }
.weather { width: 530px; padding-left: 24px; display: flex; align-items: center; gap: 4px; font-size: 14px; line-height: 20px; position: relative; }
.weather > svg { margin-top: -10px; }
.weather p span, .clock span { display: block; }
.dim { color: #c4c4c4; }
.count { position: absolute; left: 44px; top: -2px; font-weight: 400; color: #111; }
.start { margin-right: 16px; }
.search {
  width: 275px; height: 40px; border-radius: 20px; background: #3d3d3d; border: 1px solid #565656;
  display: flex; align-items: center; padding: 0 7px 0 13px;
}
.search span { margin: 0 auto 1px 12px; font-size: 16.500px; letter-spacing: -.15px; color: #d4d4d4; }
.apps { display: flex; margin-left: 2.500px; }
.app { width: 55px; height: 50px; display: flex; align-items: center; justify-content: center; position: relative; }
.run::after, .active::after { content: ""; position: absolute; bottom: 1px; left: 23.500px; width: 8px; height: 4px; border-radius: 2px; background: #989898; }
.active::before { content: ""; position: absolute; inset: 0 2.500px; border: 1px solid #3b3b3b; border-radius: 5px; background: #2d2d2d; }
.active svg { position: relative; margin: -4px 0 0 5px; }
.active::after { left: 17.500px; width: 20px; background: #4cc2ff; }
.zoom i {
  width: 30px; height: 30px; border-radius: 12px; background: linear-gradient(#1466ff, #0a50e6);
  font: 600 10px/28px "Open Sans", sans-serif; text-align: center; letter-spacing: -.4px;
}
.gh-desk::before { content: ""; position: absolute; width: 28px; height: 28px; border-radius: 50%; background: #74379f; }
.gh-desk svg { position: relative; color: #fff; }
.tray { margin-left: auto; padding-right: 27px; display: flex; align-items: center; }
.s-cloud { margin: 0 20px 0 22px; }
.s-vol { margin: 0 10px 0 9px; }
.clock { width: 89px; margin-right: 10px; text-align: right; font-size: 14px; line-height: 20px; }
```
